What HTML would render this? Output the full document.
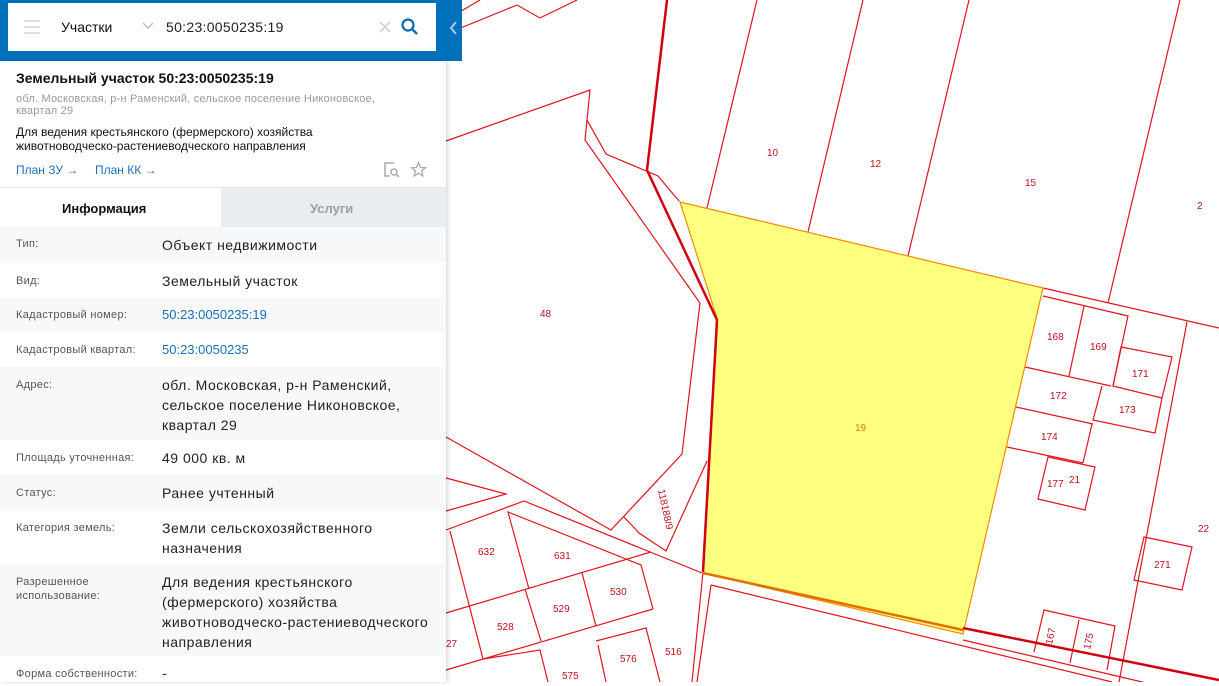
<!DOCTYPE html>
<html><head><meta charset="utf-8">
<style>
*{margin:0;padding:0;box-sizing:border-box}
body{width:1219px;height:682px;overflow:hidden;position:relative;background:#fff;font-family:"Liberation Sans","DejaVu Sans",sans-serif;}
#map{position:absolute;left:0;top:0}
#hdr{position:absolute;left:0;top:0;width:462px;height:61px;background:#0070ba}
#sb{position:absolute;left:8px;top:3px;width:428px;height:48px;background:#fff}
#panel{position:absolute;left:0;top:61px;width:446px;height:621px;background:#fff;box-shadow:2px 0 4px rgba(0,0,0,.15)}
.t{position:absolute;white-space:nowrap}
.row{position:absolute;left:0;width:446px}
.g{background:#f7f8fa}
.lab{position:absolute;left:16px;font-size:11px;color:#555;line-height:14px;letter-spacing:0.3px}
.val{position:absolute;left:162px;font-size:14px;color:#222;line-height:20px;letter-spacing:0.5px}
.lnk{color:#1a6fb8}
</style></head><body>
<svg id="map" width="1219" height="682" viewBox="0 0 1219 682">
<g fill="none" stroke="#e0141e" stroke-width="1.2">
<polyline points="446,34 517,5 540,18 577,0"/>
<polyline points="446,20 480,0"/>
<polyline points="446,141 590,90 585,140 700,303 682,454 611,530 446,437"/>
<polyline points="587,120 606,154 658,176 679,201"/>
<polyline points="707,461 666,551 639,533 624,517"/>
<polyline points="446,478 506,494 446,511"/>
<polyline points="446,530 524,501 702,573"/>
<polyline points="711,585 1112,682"/>
<polyline points="711,585 697,682"/>
<polyline points="703,572 692,682"/>
<line x1="757" y1="0" x2="707" y2="208"/>
<line x1="863" y1="0" x2="808" y2="232"/>
<line x1="969" y1="0" x2="908" y2="256"/>
<line x1="1180" y1="0" x2="1108" y2="303"/>
<line x1="1043" y1="288" x2="1219" y2="328"/>
<line x1="1187" y1="322" x2="1119" y2="682"/>
<polyline points="1043,296 1128,316 1113,386"/>
<polygon points="1121,347 1172,357 1162,398 1113,386"/>
<line x1="1084" y1="306" x2="1069" y2="376"/>
<line x1="1025" y1="367" x2="1111" y2="386"/>
<polyline points="1102,386 1093,420 1155,433 1162,398"/>
<line x1="1016" y1="407" x2="1093" y2="424"/>
<line x1="1092" y1="424" x2="1083" y2="463"/>
<line x1="1007" y1="447" x2="1083" y2="463"/>
<polygon points="1048,457 1095,467 1085,510 1038,499"/>
<polygon points="1144,537 1192,547 1182,590 1134,580"/>
<polyline points="1034,652 1044,610 1115,626 1107,670"/>
<line x1="1079" y1="620" x2="1070" y2="663"/>
<line x1="963" y1="640" x2="1219" y2="700"/>
<line x1="450" y1="531" x2="483" y2="659"/>
<polyline points="529,589 508,512 641,565 653,609"/>
<line x1="446" y1="613" x2="651" y2="552"/>
<line x1="446" y1="670" x2="653" y2="609"/>
<line x1="525" y1="589" x2="541" y2="641"/>
<line x1="582" y1="573" x2="596" y2="626"/>
<polyline points="596,641 646,628 660,682"/>
<polyline points="483,659 540,650 548,682"/>
<line x1="598" y1="645" x2="606" y2="682"/>
</g>
<polygon points="680,202 1043,288 963,634 703,573 717,318" fill="#ffff80" stroke="#f08c00" stroke-width="1.2"/>
<polyline points="703,573 963,630" fill="none" stroke="#e07000" stroke-width="2.5"/>
<polyline points="667,0 647,170 717,320 703,572" fill="none" stroke="#d00010" stroke-width="2.5"/>
<line x1="963" y1="628" x2="1219" y2="680" stroke="#d00010" stroke-width="2.5"/>
<g font-size="10" fill="#c0101a" font-family="Liberation Sans,sans-serif">
<text x="767" y="156">10</text><text x="870" y="167">12</text><text x="1025" y="186">15</text><text x="1197" y="209">2</text>
<text x="540" y="317">48</text><text x="855" y="431" fill="#e08000">19</text>
<text x="1047" y="340">168</text><text x="1090" y="350">169</text><text x="1132" y="377">171</text>
<text x="1050" y="399">172</text><text x="1119" y="413">173</text><text x="1041" y="440">174</text>
<text x="1047" y="487">177</text><text x="1069" y="483">21</text><text x="1198" y="532">22</text>
<text x="1154" y="568">271</text><text x="478" y="555">632</text><text x="554" y="559">631</text>
<text x="610" y="595">530</text><text x="553" y="612">529</text><text x="497" y="630">528</text>
<text x="446" y="647">27</text><text x="620" y="662">576</text><text x="562" y="679">575</text><text x="665" y="655">516</text>
<text transform="translate(658,490) rotate(78)">118188/9</text>
<text transform="translate(1052,645) rotate(-78)">167</text>
<text transform="translate(1090,650) rotate(-78)">175</text>
</g>
</svg>
<div id="hdr"></div>
<svg style="position:absolute;left:449px;top:20px" width="10" height="16"><polyline points="7,2 2,8 7,14" fill="none" stroke="#a8cbe6" stroke-width="2"/></svg>
<div id="sb">
<div style="position:absolute;left:16px;top:17px;width:16px;height:2px;background:#ddd"></div>
<div style="position:absolute;left:16px;top:23px;width:16px;height:2px;background:#ddd"></div>
<div style="position:absolute;left:16px;top:29px;width:16px;height:2px;background:#ddd"></div>
<span class="t" style="left:53px;top:16px;font-size:14px;color:#111">Участки</span>
<svg style="position:absolute;left:134px;top:19px" width="12" height="8"><polyline points="1,1 6,6 11,1" fill="none" stroke="#bbb" stroke-width="1.5"/></svg>
<span class="t" style="left:158px;top:16px;font-size:14px;color:#222;letter-spacing:0.3px">50:23:0050235:19</span>
<svg style="position:absolute;left:371px;top:18px" width="12" height="12"><path d="M1 1L11 11M11 1L1 11" stroke="#ccc" stroke-width="1.5"/></svg>
<svg style="position:absolute;left:393px;top:15px" width="18" height="18"><circle cx="7" cy="7" r="5.5" fill="none" stroke="#0a6bb5" stroke-width="2.2"/><path d="M11 11L16 16" stroke="#0a6bb5" stroke-width="2.5"/></svg>
</div>
<div id="panel">
<span class="t" style="left:16px;top:9px;font-size:14px;font-weight:bold;color:#111">Земельный участок 50:23:0050235:19</span>
<div class="t" style="left:16px;top:32px;font-size:11px;color:#9a9a9a;line-height:12px;white-space:normal;width:375px;letter-spacing:0.2px">обл. Московская, р-н Раменский, сельское поселение Никоновское, квартал 29</div>
<div class="t" style="left:16px;top:64px;font-size:12px;color:#111;line-height:14px;white-space:normal;width:360px">Для ведения крестьянского (фермерского) хозяйства животноводческо-растениеводческого направления</div>
<span class="t lnk" style="left:16px;top:102px;font-size:12px">План ЗУ →</span>
<span class="t lnk" style="left:95px;top:102px;font-size:12px">План КК →</span>
<svg style="position:absolute;left:383px;top:100px" width="18" height="18"><path d="M11 2H2V15H7" fill="none" stroke="#aaa" stroke-width="1.5"/><circle cx="11" cy="11" r="3" fill="none" stroke="#aaa" stroke-width="1.5"/><path d="M13 13L16 16" stroke="#aaa" stroke-width="1.5"/></svg>
<svg style="position:absolute;left:410px;top:100px" width="17" height="17"><polygon points="8.5,1.5 10.5,6.5 15.5,6.8 11.6,10 12.9,15 8.5,12.2 4.1,15 5.4,10 1.5,6.8 6.5,6.5" fill="none" stroke="#aaa" stroke-width="1.3"/></svg>
<div style="position:absolute;left:0;top:126px;width:446px;height:1px;background:#e6e8ec"></div>
<div style="position:absolute;left:221px;top:127px;width:225px;height:39px;background:#e9ecf1"></div>
<span class="t" style="left:62px;top:140px;font-size:13px;font-weight:bold;color:#111">Информация</span>
<span class="t" style="left:310px;top:140px;font-size:13px;font-weight:bold;color:#9a9ea6">Услуги</span>
<div class="row g" style="top:166px;height:35px"><span class="lab" style="top:10px">Тип:</span><span class="val" style="top:8px">Объект недвижимости</span></div>
<div class="row" style="top:201px;height:35px"><span class="lab" style="top:12px">Вид:</span><span class="val" style="top:9px">Земельный участок</span></div>
<div class="row g" style="top:236px;height:35px"><span class="lab" style="top:11px">Кадастровый номер:</span><span class="val lnk" style="top:8px;font-size:13px;letter-spacing:0">50:23:0050235:19</span></div>
<div class="row" style="top:271px;height:35px"><span class="lab" style="top:11px">Кадастровый квартал:</span><span class="val lnk" style="top:8px;font-size:13px;letter-spacing:0">50:23:0050235</span></div>
<div class="row g" style="top:306px;height:73px"><span class="lab" style="top:11px">Адрес:</span><span class="val" style="top:8px">обл. Московская, р-н Раменский,<br>сельское поселение Никоновское,<br>квартал 29</span></div>
<div class="row" style="top:379px;height:35px"><span class="lab" style="top:11px">Площадь уточненная:</span><span class="val" style="top:8px">49 000 кв. м</span></div>
<div class="row g" style="top:414px;height:35px"><span class="lab" style="top:11px">Статус:</span><span class="val" style="top:8px">Ранее учтенный</span></div>
<div class="row" style="top:449px;height:54px"><span class="lab" style="top:11px">Категория земель:</span><span class="val" style="top:8px">Земли сельскохозяйственного<br>назначения</span></div>
<div class="row g" style="top:503px;height:92px"><span class="lab" style="top:11px">Разрешенное<br>использование:</span><span class="val" style="top:8px">Для ведения крестьянского<br>(фермерского) хозяйства<br>животноводческо-растениеводческого<br>направления</span></div>
<div class="row" style="top:595px;height:30px"><span class="lab" style="top:11px">Форма собственности:</span><span class="val" style="top:7px">-</span></div>
</div>
</body></html>
